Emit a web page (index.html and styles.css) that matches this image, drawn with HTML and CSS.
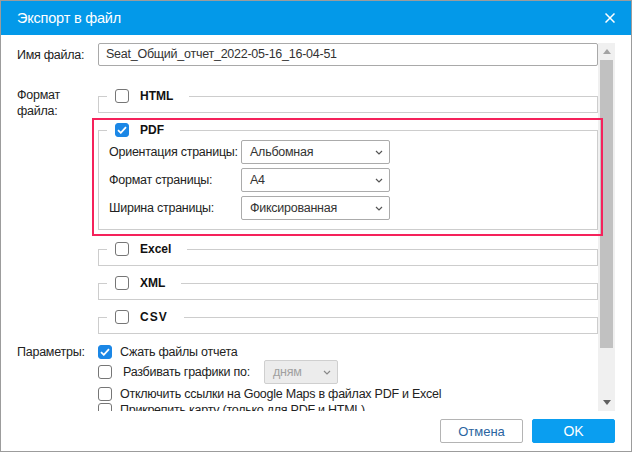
FILE: index.html
```html
<!DOCTYPE html>
<html lang="ru">
<head>
<meta charset="utf-8">
<title>Экспорт в файл</title>
<link rel="stylesheet" href="styles.css">
</head>
<body>
<div class="dialog">
  <div class="header">
    <span class="title">Экспорт в файл</span>
    <svg class="close" width="10" height="10" viewBox="0 0 10 10"><path d="M0.5 0.5L9.5 9.5M9.5 0.5L0.5 9.5" stroke="#fff" stroke-width="1.5" fill="none"/></svg>
  </div>
  <div class="body">
    <div class="content">
      <div class="form">
        <div class="lbl lbl-name">Имя файла:</div>
        <div class="input">Seat_Общий_отчет_2022-05-16_16-04-51</div>

        <div class="lbl lbl-fmt">Формат<br>файла:</div>
        <div class="formats">
          <fieldset class="fmt">
            <legend><span class="cb"></span>HTML</legend>
          </fieldset>
          <div class="hl">
            <fieldset class="fmt">
              <legend><span class="cb on"><svg width="10" height="8" viewBox="0 0 10 8"><path d="M1 4.2L3.8 6.8L9 1.2" stroke="#fff" stroke-width="1.8" fill="none"/></svg></span>PDF</legend>
              <div class="pdf-rows">
                <div class="plbl">Ориентация страницы:</div>
                <div class="sel">Альбомная<svg class="chev" width="8" height="5" viewBox="0 0 8 5"><path d="M1 1L4 4L7 1" stroke="#555" stroke-width="1.2" fill="none"/></svg></div>
                <div class="plbl">Формат страницы:</div>
                <div class="sel">A4<svg class="chev" width="8" height="5" viewBox="0 0 8 5"><path d="M1 1L4 4L7 1" stroke="#555" stroke-width="1.2" fill="none"/></svg></div>
                <div class="plbl">Ширина страницы:</div>
                <div class="sel">Фиксированная<svg class="chev" width="8" height="5" viewBox="0 0 8 5"><path d="M1 1L4 4L7 1" stroke="#555" stroke-width="1.2" fill="none"/></svg></div>
              </div>
            </fieldset>
          </div>
          <fieldset class="fmt">
            <legend><span class="cb"></span>Excel</legend>
          </fieldset>
          <fieldset class="fmt">
            <legend><span class="cb"></span>XML</legend>
          </fieldset>
          <fieldset class="fmt">
            <legend><span class="cb"></span><span class="spaced">CSV</span></legend>
          </fieldset>
        </div>

        <div class="lbl lbl-par">Параметры:</div>
        <div class="opts">
          <div class="opt"><span class="cb on"><svg width="10" height="8" viewBox="0 0 10 8"><path d="M1 4.2L3.8 6.8L9 1.2" stroke="#fff" stroke-width="1.8" fill="none"/></svg></span>Сжать файлы отчета</div>
          <div class="opt opt-sel"><span class="cb"></span><span class="split">Разбивать графики по:</span><div class="sel sel-dis">дням<svg class="chev" width="8" height="5" viewBox="0 0 8 5"><path d="M1 1L4 4L7 1" stroke="#888" stroke-width="1.2" fill="none"/></svg></div></div>
          <div class="opt opt-gap"><span class="cb"></span>Отключить ссылки на Google Maps в файлах PDF и Excel</div>
          <div class="opt"><span class="cb"></span>Прикрепить карту (только для PDF и HTML)</div>
        </div>
      </div>
    </div>
    <div class="scrollbar">
      <div class="sb-btn"><svg width="8" height="5" viewBox="0 0 8 5"><path d="M0 5L4 0L8 5Z" fill="#a3a3a3"/></svg></div>
      <div class="sb-thumb"></div>
      <div class="sb-space"></div>
      <div class="sb-btn"><svg width="8" height="5" viewBox="0 0 8 5"><path d="M0 0L4 5L8 0Z" fill="#606060"/></svg></div>
    </div>
  </div>
  <div class="footer">
    <button class="btn btn-cancel">Отмена</button>
    <button class="btn btn-ok">OK</button>
  </div>
</div>
</body>
</html>
```
FILE: styles.css
```css
* { box-sizing: border-box; }
html, body { margin: 0; padding: 0; background: #fff; }
body {
  font-family: "Liberation Sans", Arial, sans-serif;
  font-size: 12.5px;
  letter-spacing: -0.25px;
  color: #222;
}
.dialog {
  width: 632px;
  height: 452px;
  border: 1px solid #9c9c9c;
  display: flex;
  flex-direction: column;
  background: #fff;
}
.header {
  height: 34px;
  flex: none;
  background: #0399e9;
  display: flex;
  align-items: center;
  justify-content: space-between;
  padding: 0 16px 0 16px;
}
.title {
  color: #fff;
  font-size: 14.5px;
  letter-spacing: -0.2px;
}
.close { display: block; }

.body {
  height: 376px;
  flex: none;
  display: flex;
  padding: 8px 16px 0 0;
}
.content {
  flex: 1;
  height: 368px;
  overflow-x: visible;
  overflow-y: clip;
  padding-left: 16px;
}
.form {
  display: grid;
  grid-template-columns: 81px 500px;
  align-items: start;
}
.lbl { line-height: 16px; color: #222; }
.lbl-name { align-self: center; }
.lbl-fmt { margin-top: 21px; }
.lbl-par { margin-top: 1px; }

.input {
  height: 23px;
  border: 1px solid #a9a9a9;
  border-radius: 2px;
  padding: 0 7px;
  line-height: 21px;
  color: #333;
  white-space: nowrap;
}

.formats { margin-top: 22px; }
.fmt {
  border: 1px solid #cdcdcd;
  margin: 0 0 9px 0;
  padding: 0 0 8px 8px;
  min-width: 0;
}
.hl { position: relative; margin: 0 0 11px 0; }
.hl .fmt { margin: 0; padding-bottom: 7px; }
.hl::after {
  content: "";
  position: absolute;
  z-index: 2;
  left: -6px;
  top: -4px;
  right: -5px;
  bottom: -6px;
  border: 2px solid #f5225b;
  pointer-events: none;
}
.fmt legend {
  display: flex;
  align-items: center;
  gap: 11px;
  height: 16px;
  padding: 0 16px 0 8px;
  font-weight: bold;
  font-size: 12px;
  letter-spacing: 0;
  color: #111;
}
.spaced { letter-spacing: 1px; }

.cb {
  width: 14px;
  height: 14px;
  flex: none;
  border: 1px solid #767676;
  border-radius: 3px;
  background: #fff;
  display: inline-flex;
  align-items: center;
  justify-content: center;
}
.cb.on {
  background: #1b87e6;
  border-color: #1b87e6;
}
.cb svg { display: block; }

.pdf-rows {
  display: grid;
  grid-template-columns: 132px 149px;
  grid-auto-rows: 28px;
  align-items: center;
  padding-left: 2px;
}
.plbl { color: #222; white-space: nowrap; }
.sel {
  height: 24px;
  border: 1px solid #ababab;
  border-radius: 2px;
  background: #fff;
  display: flex;
  align-items: center;
  justify-content: space-between;
  padding: 0 6px 0 8px;
  color: #333;
}
.chev { display: block; }
.sel-dis {
  width: 74px;
  background: #ececec;
  border-color: #cfcfcf;
  color: #a0a0a0;
  margin-left: 6px;
}

.opts { margin-top: 1px; }
.opt {
  display: flex;
  align-items: center;
  gap: 8px;
  height: 16px;
  white-space: nowrap;
  color: #222;
}
.opt-sel { height: 24px; }
.split { margin-left: 3px; }
.opt-gap { margin-top: 2px; }

.scrollbar {
  width: 17px;
  height: 368px;
  flex: none;
  background: #f0f0f0;
  display: flex;
  flex-direction: column;
}
.sb-btn {
  height: 17px;
  flex: none;
  display: flex;
  align-items: center;
  justify-content: center;
}
.sb-btn svg { display: block; }
.sb-thumb {
  height: 288px;
  flex: none;
  margin: 0 2px 0 2px;
  background: #c1c1c1;
}
.sb-space { flex: 1; }

.footer {
  height: 40px;
  flex: none;
  display: flex;
  justify-content: flex-end;
  align-items: flex-start;
  gap: 9px;
  padding: 8px 16px 0 0;
}
.btn {
  width: 83px;
  height: 24px;
  border-radius: 2px;
  font-family: "Liberation Sans", Arial, sans-serif;
  font-size: 13px;
  padding: 0;
  cursor: pointer;
}
.btn-cancel {
  background: #fff;
  border: 1px solid #b4b4b4;
  color: #2a64a0;
}
.btn-ok {
  background: #0a9ef0;
  border: 1px solid #0a9ef0;
  color: #fff;
  font-size: 14px;
}
```
